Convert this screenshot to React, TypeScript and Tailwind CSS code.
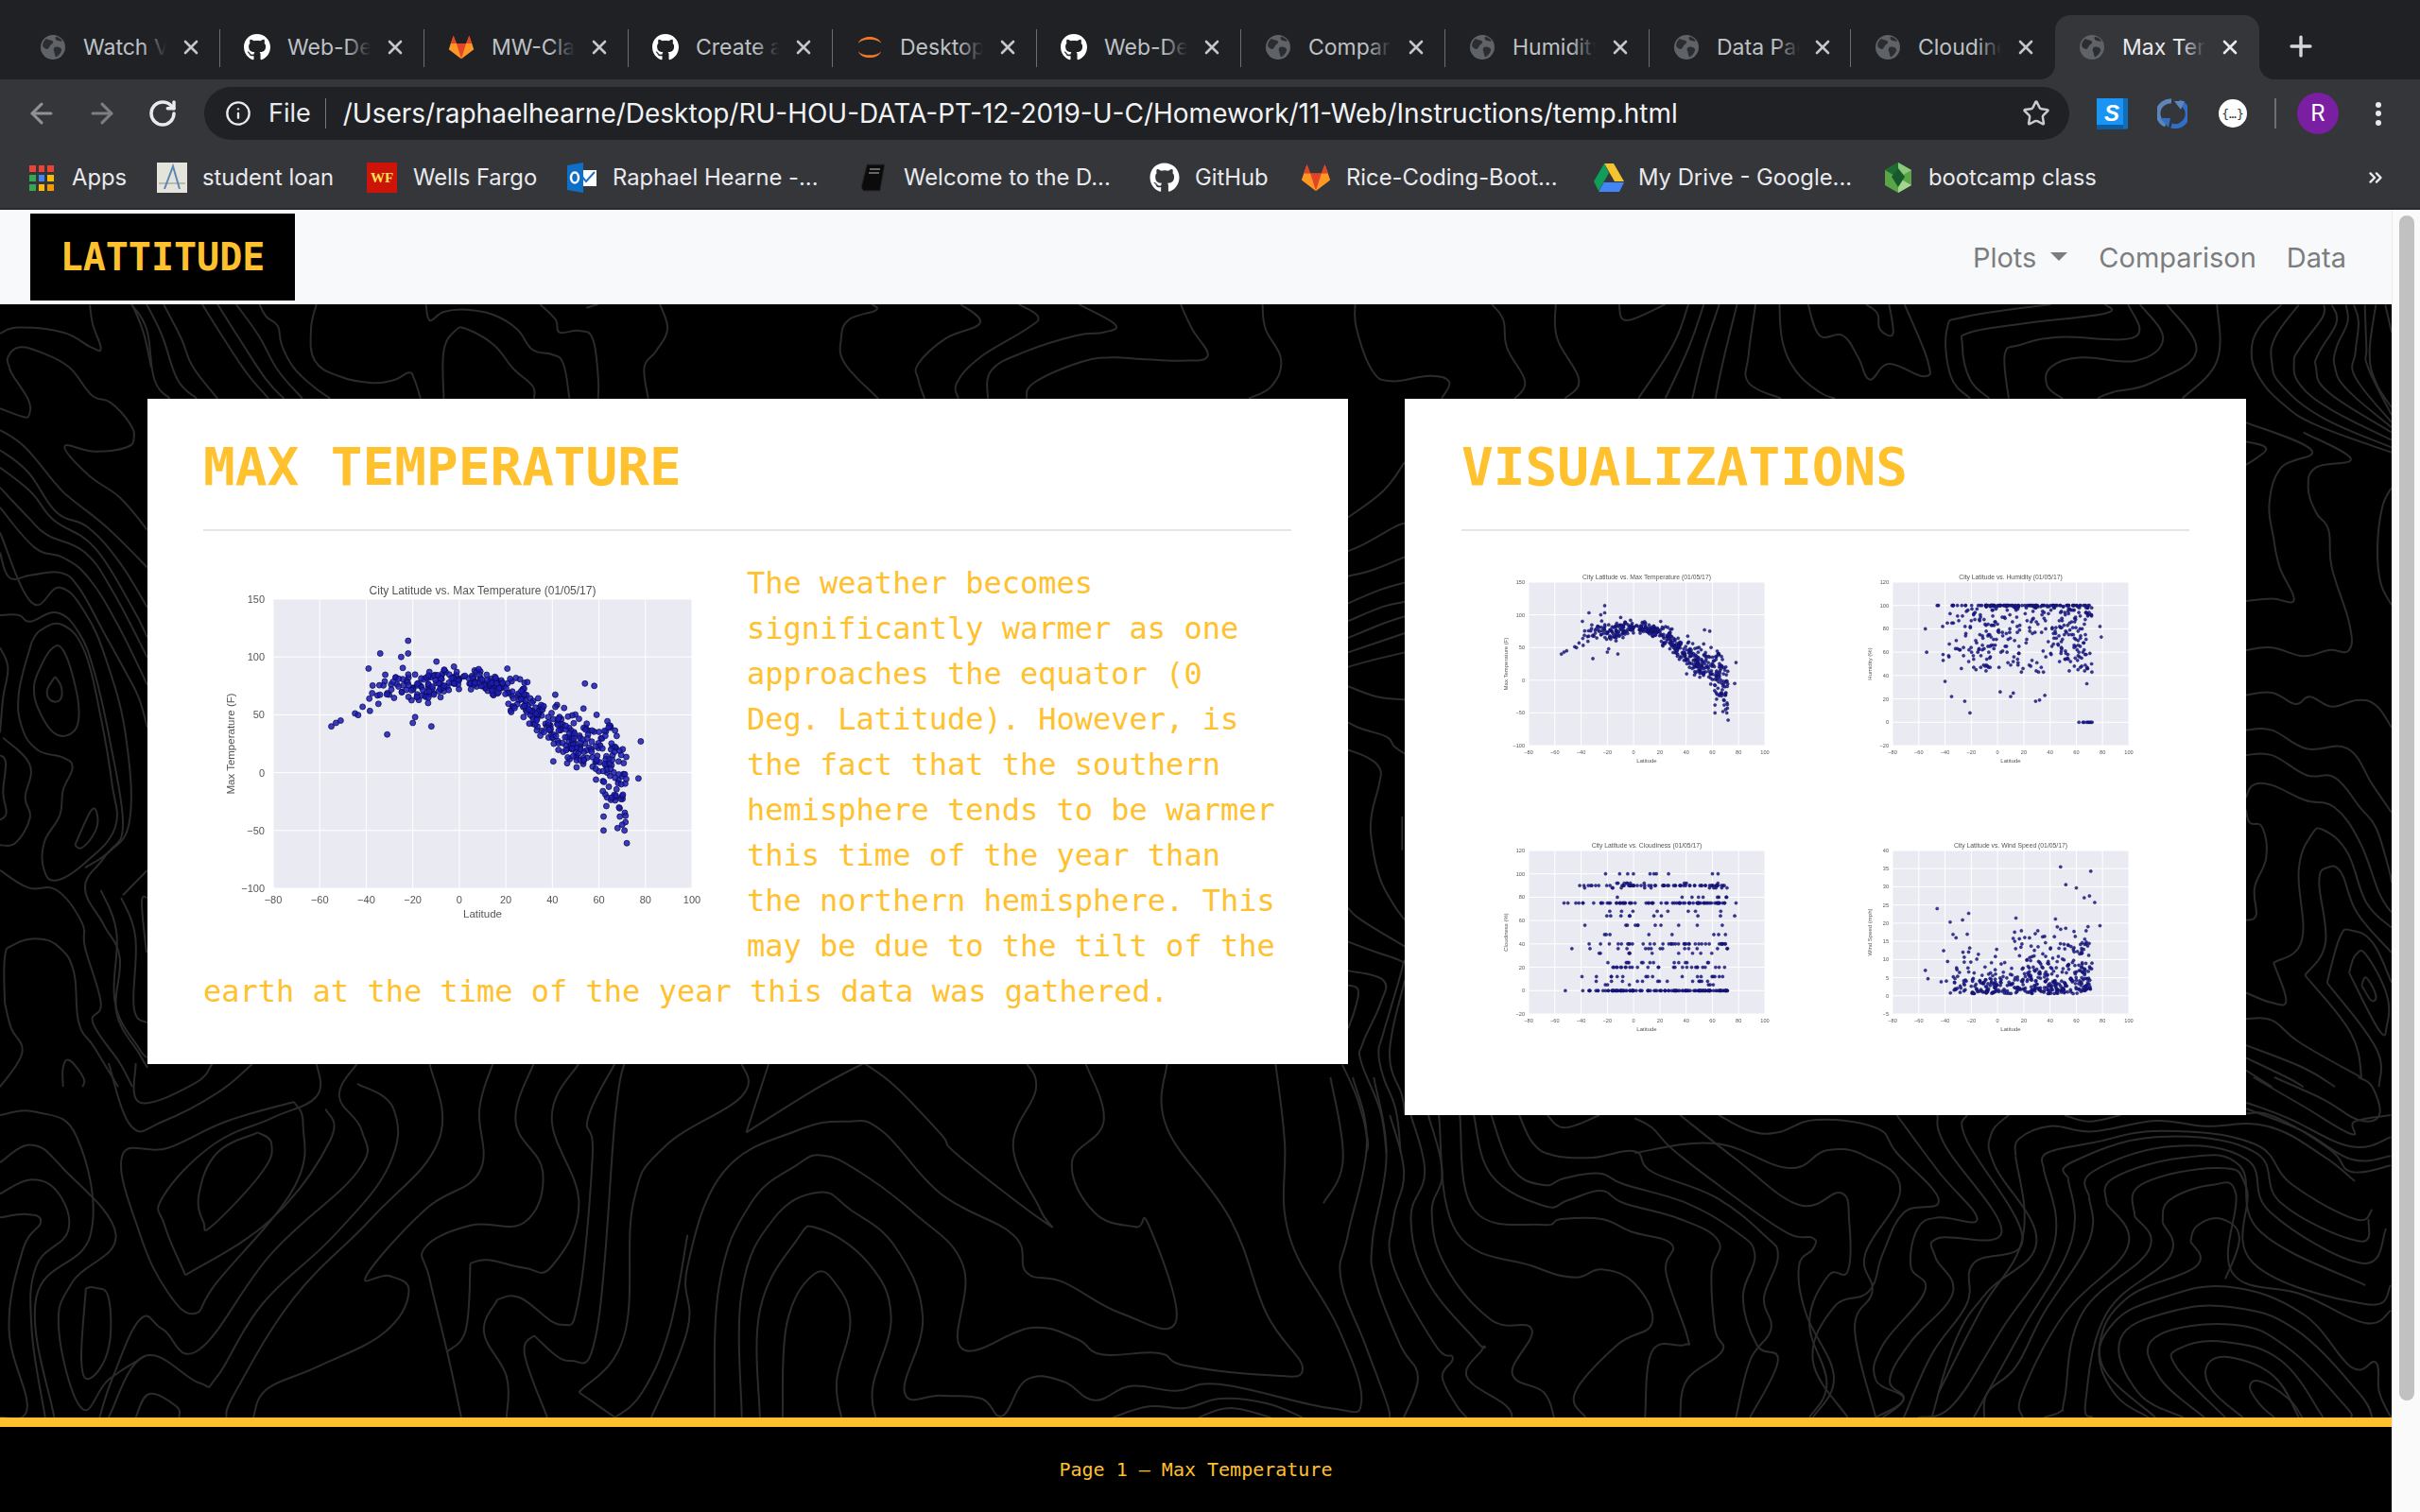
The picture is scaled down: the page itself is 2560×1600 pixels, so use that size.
import React from "react";
import { ArrowLeft, ArrowRight, RotateCw, Info, Star, X, Plus, ChevronsRight } from "lucide-react";
import { FaGithub } from "react-icons/fa";

/* ---------- contour background ---------- */
type Group = { ox: number; oy: number; sx: number; sy: number; lines: number[][]; ext?: boolean };
const groups: Group[] = [
  { ox: 0, oy: 315, sx: 1.225, sy: 3, lines: [
    [170,21,190,100,200,260,220,320],[190,21,210,120,230,260,255,320],[212,21,235,130,250,220,282,320],
    [262,21,290,130,320,240,348,320],[282,21,310,130,345,260,368,320],[306,21,335,120,360,230,392,320],
    [336,21,345,60,360,90,365,150,380,220,405,280,428,320],
    [410,21,403,100,408,200,440,250,480,270,510,262,530,238,537,260,545,320],
    [552,21,557,72,575,45,605,38,640,55,670,100,690,165,715,180,730,210,738,320],
    [700,21,720,70,725,110,750,105,768,130,775,250,775,320],
    [575,320,575,170,590,105,605,100,640,150,665,225,690,280,692,320],
    [855,21,865,100,850,170,835,220,840,320],[760,32,775,21],
    [1130,21,1135,40,1100,70,1090,130,1095,210,1138,320],
    [1245,21,1270,80,1225,130,1190,210,1190,260,1198,320],
    [1320,21,1345,60,1330,100,1270,190,1240,270,1242,320],
    [1398,21,1445,85,1430,110,1395,120,1330,170,1285,230,1280,320],
    [1330,320,1340,270,1400,205,1440,190,1480,195,1530,200,1565,185,1545,100,1530,21],
  ]},
  { ox: 1280, oy: 315, sx: 1.225, sy: 3, lines: [
    [68,21,72,100,92,195,80,280,50,320],[188,21,190,100,210,230,235,265,285,248,310,268,300,320],
    [365,21,380,70,385,160,408,265,395,320],[448,21,450,130,478,260,460,320],[530,21,540,72,590,21],
    [620,21,600,150,555,320],[640,21,620,160,590,320],[660,21,640,170,625,320],[683,21,665,200,655,320],
    [707,21,698,180,698,270,740,320],[738,21,742,140,760,235,790,300,810,320],
    [775,21,790,120,820,120,840,190,855,260,880,210,925,250,930,200,900,21],
    [850,21,865,50,868,100,885,115,880,21],
    [1090,21,980,60,955,100,960,250,985,320],[1160,21,1160,50,1060,80,985,110,975,150,985,260,1010,320],
    [1190,21,1198,125,1100,125,1050,150,1030,180,1035,320],
    [1205,21,1235,130,1200,200,1130,190,1090,220,1085,280,1105,320],
    [1240,21,1278,170,1220,270,1170,300,1150,320],[1305,21,1305,200,1260,320],
  ]},
  { ox: 0, oy: 320, sx: 3, sy: 1.889, lines: [
    [0,62,60,50,200,60,290,90,320,92,295,45,285,5],[420,5,455,60,480,130],
    [30,130,25,110,60,90,130,100,220,130,290,185,350,200,410,240,425,270,400,290,300,298,205,288,280,345,380,390,468,455],
    [0,212,70,228,92,225,90,195,40,145,30,130],
    [0,255,80,290,180,365,230,395,340,450,468,530],[0,295,90,340,180,420,280,450,380,520,468,610],
    [0,330,100,380,170,435,300,490,420,610,468,670],[0,370,90,430,150,465,270,500,360,580,468,710],
    [0,410,110,490,200,510,280,550,370,640,468,765],[0,500,30,550,100,545,190,540,250,570,330,660,400,740,440,790,468,850],
    [0,460,100,600,190,570,270,620,340,720,400,870,410,1040,330,1110,270,1170,330,1245,380,1310,370,1420,440,1500,468,1530],
    [0,625,60,625,95,638,180,620,250,660,300,740,350,880,390,1040,350,1095,270,1130],
    [100,680,130,655,200,645,270,700,320,830,355,960,365,1050,270,1120,180,1155,140,1135,140,1080,190,1025,200,975,230,930,200,910,120,895,70,850,60,780,100,680],
    [120,740,160,695,200,695,240,770,250,830,225,862,170,860,120,810,108,770,120,740],
    [175,748,195,770,190,795,160,795,150,775,175,748],[238,1085,290,1015,310,1030,300,1060,260,1090,238,1085],
    [0,690,25,730,10,790,0,860],[10,870,95,925,80,990,95,1030,50,1080,0,1085],[0,905,18,920,10,980,20,1020,0,1035],
    [0,1135,90,1170,180,1175,260,1240,270,1290,320,1400,295,1440,380,1520,420,1568],
    [320,1175,370,1260,365,1400,440,1490,468,1510],[385,1190,430,1270,425,1410,468,1440],[468,1190,450,1200,465,1300],[468,1135,390,1185],
    [15,1400,15,1310,40,1285,120,1272,190,1290,235,1340,250,1440,300,1490,375,1568],[15,1400,35,1450,70,1500,0,1568],
    [200,1568,200,1530,220,1515,265,1550,262,1568],
  ]},
  { ox: 1420, oy: 420, sx: 3, sy: 1.96, lines: [
    [18,250,130,195,198,135],[18,320,70,305,165,270,198,262],[18,372,100,358,198,332],[18,428,120,400,198,385],
    [18,465,130,435,198,425],[18,500,130,470,198,455],[18,530,198,490],[18,560,100,545,198,530],[18,600,110,622,198,628],
    [18,675,60,688,140,705,165,725,198,740],[18,732,80,748,118,770,118,800,92,870,95,930,120,1000,160,1050,198,1085],
    [18,1060,60,1085,198,1140],[18,1130,100,1150,185,1170,190,1185,130,1320,115,1360,130,1410,170,1480,185,1568],
    [18,1190,130,1210,120,1260,65,1340,60,1380,120,1480,140,1568],[18,1220,50,1230,40,1270,18,1310],
    [198,1210,150,1360,190,1450,198,1490],[0,1385,50,1460,80,1540,75,1568],[190,870,190,940],
  ]},
  { ox: 2370, oy: 320, sx: 3, sy: 1.889, lines: [
    [130,5,60,50,35,100,60,150,130,200,240,245,480,300],[185,5,110,70,100,120,130,165,260,230,480,290],
    [265,5,260,30,190,90,170,120,190,165,290,215,480,275],[290,5,305,40,250,100,240,130,280,180,480,260],
    [335,5,340,40,305,90,300,130,340,175,480,250],[360,5,375,40,365,100,365,150,480,240],
    [395,5,400,90,405,130,480,225],[430,5,410,100,430,160,480,210],[460,5,480,60],
    [18,240,225,295,130,330,92,400,105,470,125,530,170,595,100,592,18,597],[18,278,82,293,18,325],
    [200,260,350,312,240,330,215,370,240,420,280,455,290,530,345,640,345,695,280,695,200,707,100,690,18,695],
    [480,605,445,560,435,490,450,410,480,370],[18,785,100,780,175,803,220,788,290,808,370,795,430,805,480,850],
    [18,855,100,855,210,892,340,892,420,965,480,1020],[18,905,100,905,210,945,300,950,380,1010,430,1050,470,1130,480,1160],
    [18,990,40,965,100,965,205,995,300,1010,380,1080,440,1180,480,1220],[18,1015,30,1040,70,1050,82,1110,45,1170,50,1225,18,1235],
    [105,1320,195,1275,185,1135,225,1065,265,1055,340,1100,400,1200,480,1250],[205,1345,270,1280,250,1160,275,1130,320,1140,370,1220,480,1300],
    [275,1360,315,1270,350,1255,420,1280,480,1360],[345,1340,365,1305,400,1305,465,1385,465,1445,440,1455,345,1340],
    [385,1365,400,1350,430,1385,415,1395,385,1365],[105,1320,145,1395,100,1400,18,1380],[205,1345,350,1460,385,1550],
    [275,1360,430,1490,440,1568],[18,1432,100,1435,190,1480,385,1550],[18,1485,200,1530,300,1568],[18,1510,150,1550,200,1568],[18,1535,100,1568],
  ]},
  { ox: 1400, oy: 1140, sx: 1.352, sy: 3, lines: [
    [10,0,28,260,0,400],[42,0,62,210,35,500,25,640,60,850,90,1030,95,1080],[72,0,90,250,70,520,75,650,110,850,135,950,115,1080],
    [95,120,115,300,100,450,100,600,160,850,185,890,170,950,190,1040,205,1080],[125,120,145,300,125,450,150,650,220,840,228,860,205,950,260,1040,270,1080],
    [150,120,170,300,155,430,175,600,240,770,298,800,270,940,315,1000,330,1080],
    [165,120,190,490,300,600,360,635,398,610,445,655,470,780,420,850,360,1000,375,1080],
    [280,120,300,210,330,248,385,255,445,235,470,300,560,380,630,500,650,570,630,700,640,800,610,900,590,1080],
    [320,120,345,160,395,120],[240,120,270,290,315,342,345,320,395,305,430,340,520,400,590,490,617,565,600,700,620,850,650,900,610,1080],
    [215,120,240,310,315,408,350,390,397,360,430,400,510,450,565,520,555,620,560,800,570,870,520,960,510,1080],
    [195,120,215,420,312,468,340,450,398,450,440,490,498,530,490,620,520,820,515,850,470,870,460,1080],
    [445,130,470,160,500,230,570,350,660,490,700,510,700,545,680,600,690,750,730,950,700,1080],
    [510,120,590,260,680,405,740,367,752,460,750,615,722,630,695,780,720,970,695,1080],
    [565,120,610,170,650,175,705,135,790,160,820,240,880,390,830,430,800,560,780,680,730,730,700,900,750,1080],
    [445,240,560,210,665,288,720,232,775,250,825,355,775,560,785,680,760,800,790,1080],
    [820,120,880,300,935,450,880,445,850,480,840,600,860,680,800,850,790,960,830,1020,790,1080],
    [878,120,890,220,970,490,880,510,875,570,900,685,840,840,810,960,830,1020,800,1080],
    [920,120,920,200,1000,510,930,590,920,720,870,880,830,1080],
    [980,120,955,180,960,280,1020,520,950,680,905,830,870,1080],[1060,120,1095,140,1140,120],
    [990,250,995,195,1040,155,1100,172,1190,138,1260,155,1350,155,1430,250,1475,330],
    [1030,290,1035,240,1100,208,1200,170,1330,210,1385,340,1475,450,1500,420],[1065,320,1070,270,1190,190,1330,235,1370,400,1480,520,1495,450],
    [1095,380,1100,300,1210,220,1320,260,1355,430,1485,590,1520,480],[1120,400,1130,320,1230,255,1310,280,1340,490,1490,660],
    [1160,440,1170,340,1280,288,1320,350,1330,590,1490,720,1527,660],[1200,460,1210,390,1270,342,1305,370,1300,620,1400,690,1490,780,1527,740],
    [1240,520,1250,470,1285,450,1310,510,1290,640],
    [990,250,1000,510,940,740,880,1000],[1030,290,1045,530,970,800,900,1040,850,1080],[1065,320,1070,520,1000,800,950,1000,930,1080],
    [1095,380,1095,520,1030,750,990,920,950,1000,945,1080],[1120,400,1150,540,1060,750,1000,1000,1000,1080],[1160,440,1180,550,1085,750,1060,1020,1055,1060,1030,1080],
    [1200,460,1210,570,1120,750,1090,1030,1100,1080],[1240,520,1248,600,1150,700,1110,850,1130,1000,1180,1080],
    [1190,1080,1115,920,1130,780,1200,700,1295,665,1400,750,1470,920,1505,905,1510,1000,1527,1080],
    [1230,1080,1165,1000,1140,830,1210,745,1300,730,1390,800,1480,1000,1500,1080],
    [1260,1080,1195,950,1190,825,1300,785,1380,860,1460,1040,1470,1080],[1290,1080,1220,920,1225,860,1290,840,1370,900,1430,1080],
    [1315,1080,1270,990,1265,910,1300,890,1360,950,1395,1080],[1360,1080,1340,1040,1325,985,1340,965,1380,1020,1400,1080],
    [1330,0,1400,90,1470,180,1475,140,1527,120],[1360,0,1430,70,1480,135,1510,120,1500,30,1480,0],[1320,80,1380,130,1470,220,1527,190],
    [1320,100,1400,170,1470,260,1527,250],[1320,115,1360,125,1440,230,1470,300,1527,280],
  ]},
  { ox: 0, oy: 1140, sx: 1.045, sy: 3, ext: true, lines: [
    [0,120,40,110,85,190,100,500,40,700,60,1080],[0,270,35,215,70,290,128,500,80,650,65,800,90,1050,120,960,160,885],
    [0,370,35,325,65,370,75,490,40,600,35,800,50,1080],[0,445,30,435,45,460,25,550,10,800,30,1050,0,1080],
    [120,0,145,155,180,140,240,50,280,0],[150,0,155,80,215,20,235,0],
    [325,78,250,140,185,225,135,250,155,500,185,680,215,750,240,650,325,350,335,150,325,78],
    [285,175,240,240,220,370,225,460,235,470,290,300,300,210,285,175],
    [205,628,182,470,180,380,235,215,300,130,350,60,350,0],[205,628,300,450,365,200,360,100],
    [395,0,375,60,400,170,395,300,300,560,220,865,180,800,155,768,125,950,110,1080],
    [395,20,435,100,430,280,370,500,290,720,240,950,220,970,160,885,120,1080],
    [475,0,485,200,410,450,325,700,260,1000,250,1080],[590,0,570,140,600,300,580,460,520,470,470,540,475,640,495,880,510,1080],
    [545,0,530,100,530,300,470,420,405,630,430,630,452,680,425,810,350,920,295,990,280,1080],
    [520,590,540,580,580,605,610,600,640,400,610,130,640,0],[520,590,515,800,495,870],
    [550,705,575,700,620,785,640,700,655,250,650,130,680,0],[550,705,535,810,560,950,560,1080],
    [590,820,630,900,660,800,680,130,690,0],[590,820,580,880,605,1080],
    [640,1000,690,820,700,400,735,220,820,60,820,0],[640,1000,680,1080],
    [825,175,900,40,955,0],[825,175,850,0],[955,0,990,30,1040,180,1060,250,1155,460,1150,420,1120,220,1145,40,1135,0],
    [720,1080,760,800,760,600,800,300,880,170,935,140,975,170,1040,370,1120,500,1135,620,1175,650,1240,750,1300,775,1270,470,1255,475,1210,430,1185,270,1220,140,1200,0],
    [790,1080,795,660,830,400,880,280,910,248,950,300,1010,430,1065,600,1063,860,1140,795,1190,830,1218,880,1280,875,1310,915,1400,945,1440,925,1400,750,1360,450,1290,160,1290,0],
    [820,1080,820,680,855,450,905,365,940,420,990,540,1020,760,1000,1000,1040,1010,1085,1020,1108,1075,1135,960,1175,965,1210,1025,1250,980,1300,995,1350,975,1470,1050,1505,1030,1480,800,1425,500,1420,200,1410,0],
    [840,1080,840,740,880,520,905,480,960,590,985,760,965,980,968,1080],[865,1080,870,780,900,625,925,660,940,780,925,960,930,1080],
    [1230,1080,1270,1045,1310,1050,1350,1020,1400,1035,1440,1080],[1325,1080,1360,1050,1405,1080],
    [95,670,105,668,120,700,120,860,100,955,90,900,95,670],[150,1080,165,1005,195,1045,198,1080],[680,1080,710,1000,740,800,760,500],
  ]},
];
function smooth(p: [number, number][]) {
  let d = `M${p[0][0].toFixed(1)} ${p[0][1].toFixed(1)}`;
  for (let i = 0; i < p.length - 1; i++) {
    const a = p[Math.max(i - 1, 0)], b = p[i], c = p[i + 1], e = p[Math.min(i + 2, p.length - 1)];
    const k = 5;
    d += `C${(b[0] + (c[0] - a[0]) / k).toFixed(1)} ${(b[1] + (c[1] - a[1]) / k).toFixed(1)} ${(c[0] - (e[0] - b[0]) / k).toFixed(1)} ${(c[1] - (e[1] - b[1]) / k).toFixed(1)} ${c[0].toFixed(1)} ${c[1].toFixed(1)}`;
  }
  return d;
}
const contourPaths: string[] = [];
groups.forEach((g) => g.lines.forEach((l) => {
  const pts: [number, number][] = [];
  for (let i = 0; i < l.length; i += 2) {
    const y = g.ext && l[i + 1] === 0 ? -45 : l[i + 1];
    pts.push([g.ox + l[i] / g.sx, g.oy - 322 + y / g.sy]);
  }
  contourPaths.push(smooth(pts));
}));

/* ---------- scatter data ---------- */
function rng(seed: number) {
  let s = seed;
  return () => { s = (s * 1664525 + 1013904223) % 4294967296; return s / 4294967296; };
}
type P = [number, number];
const interp = (t: number[][], x: number) => {
  for (let i = 0; i < t.length - 1; i++) if (x <= t[i + 1][0]) {
    const f = (x - t[i][0]) / (t[i + 1][0] - t[i][0]);
    return t[i][1] + f * (t[i + 1][1] - t[i][1]);
  }
  return t[t.length - 1][1];
};
const lats = (r: () => number, n: number) => Array.from({ length: n }, () =>
  r() < 0.3 ? -46 + 46 * Math.sqrt(r()) : 72 * Math.pow(r(), 0.8));
const tempData: P[] = (() => {
  const r = rng(11);
  const m = [[-55,40],[-45,55],[-35,68],[-25,77],[-15,74],[-5,79],[5,79],[15,78],[25,66],[35,47],[45,30],[55,22],[65,8],[72,-15]];
  const pts: P[] = lats(r, 470).map((la) => {
    const sp = la < 0 ? 11 : la < 20 ? 8 : la < 40 ? 15 : la < 60 ? 20 : 28;
    const g = (r() + r() + r() - 1.5) * 1.25;
    return [la, interp(m, la) + g * sp];
  });
  return pts.concat([[-22,114],[-22,103],[-34,103],[-25,100],[-39,90],[-31,33],[-12,40],[-20,43],[-19,48],[54,77],[58,75],[59,50],[72,-61],[78,27],[77,-5],[-55,40],[-53,43],[-51,45],[71,-50],[70,-45],[68,-48],[62,-50],[62,-38],[69,-38]]);
})();
const humData: P[] = (() => {
  const r = rng(23);
  const pts: P[] = lats(r, 420).map((x) => [x, r() < 0.2 ? 100 : Math.round(100 - 58 * Math.pow(r(), 1.35))]);
  return pts.concat([[-55,80],[-54,60],[-46,100],[-45,100],[-40,35],[-35,22],[-25,18],[-21,8],[2,26],[10,22],[12,25],[29,18],[32,19],[36,23],[62,0],[65,0],[66,0],[68,0],[69,0],[70,0],[71,0],[72,0],[68,33],[78,82],[79,73]]);
})();
const cloudData: P[] = (() => {
  const r = rng(37);
  const rows = [12, 8, 24, 32, 36, 48, 56, 64, 68, 80, 88, 92, 100, 5];
  return lats(r, 470).map((x) => {
    const u = r();
    const y = u < 0.25 ? 0 : u < 0.31 ? 20 : u < 0.39 ? 40 : u < 0.52 ? 75 : u < 0.65 ? 90 : rows[Math.floor(r() * rows.length)];
    return [x, y] as P;
  }).concat([[-53,75],[-50,75],[-52,0],[-47,36],[-44,75],[78,75],[77,64]]);
})();
const windData: P[] = (() => {
  const r = rng(51);
  const pts: P[] = lats(r, 450).map((x) => {
    const base = x < -20 ? 8 : x > 40 ? 6.5 : x > 5 ? 5.5 : 3.6;
    return [x, 0.6 + -Math.log(1 - r() * 0.97) * base];
  });
  return pts.map(([x, y]) => [x, Math.min(y, 22)] as P).concat([[48,35.5],[71,34.3],[52,30.6],[60,29.7],[66,27],[70,27.5],[74,25.7],[-46,24],[-22,22.7],[14,21.4],[-55,7],[-53,4.7],[78,19.3]]);
})();

/* ---------- plot ---------- */
type PlotProps = {
  w: number; h: number; x0: number; x1: number; y0: number; y1: number;
  ymin: number; ymax: number; ystep: number; title: string; ylabel: string; data: P[];
  r: number; fill: string; edge: string; titleY: number; titleF: number; tickF: number; labelF: number;
  tickX: number; tickY: number; labelY: number; ylabX: number;
};
function Plot(p: PlotProps) {
  const sx = (v: number) => p.x0 + ((v + 80) / 180) * (p.x1 - p.x0);
  const sy = (v: number) => p.y1 - ((v - p.ymin) / (p.ymax - p.ymin)) * (p.y1 - p.y0);
  const xt = [-80, -60, -40, -20, 0, 20, 40, 60, 80, 100];
  const yt: number[] = [];
  for (let v = p.ymin; v <= p.ymax; v += p.ystep) yt.push(v);
  const ff = "'Liberation Sans', sans-serif";
  return (
    <svg width={p.w} height={p.h} viewBox={`0 0 ${p.w} ${p.h}`} className="block blur-[0.4px]">
      <rect x={p.x0} y={p.y0} width={p.x1 - p.x0} height={p.y1 - p.y0} fill="#eaeaf2" />
      {xt.map((v) => <line key={v} x1={sx(v)} x2={sx(v)} y1={p.y0} y2={p.y1} stroke="#fff" strokeWidth={1} />)}
      {yt.map((v) => <line key={v} y1={sy(v)} y2={sy(v)} x1={p.x0} x2={p.x1} stroke="#fff" strokeWidth={1} />)}
      {p.data.map(([x, y], i) => <circle key={i} cx={sx(x)} cy={sy(y)} r={p.r} fill={p.fill} fillOpacity={0.85} stroke={p.edge} strokeWidth={p.r / 4} />)}
      <g fontFamily={ff} fill="#555">
        <text x={(p.x0 + p.x1) / 2} y={p.titleY} fontSize={p.titleF} textAnchor="middle">{p.title}</text>
        {xt.map((v) => <text key={v} x={sx(v)} y={p.tickY} fontSize={p.tickF} textAnchor="middle">{v < 0 ? `\u2212${-v}` : v}</text>)}
        {yt.map((v) => <text key={v} x={p.tickX} y={sy(v) + p.tickF * 0.36} fontSize={p.tickF} textAnchor="end">{v < 0 ? `\u2212${-v}` : v}</text>)}
        <text x={(p.x0 + p.x1) / 2} y={p.labelY} fontSize={p.labelF} textAnchor="middle">Latitude</text>
        <text transform={`translate(${p.ylabX} ${(p.y0 + p.y1) / 2}) rotate(-90)`} fontSize={p.labelF} textAnchor="middle">{p.ylabel}</text>
      </g>
    </svg>
  );
}
const small = { w: 385, h: 284, x0: 71, x1: 321, y0: 18, y1: 191, r: 1.6, fill: "#17178c", edge: "#0b0b55", titleY: 15, titleF: 6.8, tickF: 5.6, labelF: 6, tickX: 67, tickY: 200, labelY: 209, ylabX: 49 };

/* ---------- favicons ---------- */
const Globe = () => (
  <svg width="28" height="28" viewBox="0 0 28 28">
    <circle cx="14" cy="14" r="13" fill="#5f6368" />
    <path d="M7 5c3 2 6 1 7 3s-3 3-4 6-4 2-6 0 0-7 3-9zM16 14c3-1 6 0 7 2s-3 7-5 8-2-4-3-6 0-3 1-4zM17 3c3 0 6 2 7 5-2 0-3-1-5-1s-3-3-2-4z" fill="#2b2d30" />
  </svg>
);
const Github = ({ s = 32 }: { s?: number }) => <FaGithub size={s} color="#fff" />;
const Gitlab = ({ s = 32 }: { s?: number }) => (
  <svg width={s} height={s} viewBox="0 0 32 32">
    <path d="M16 30 1 18.5l2.5-8L6.5 2l3.6 9.5h11.8L25.500 2l3 8.500 2.500 8z" fill="#fc6d26" />
    <path d="M16 30 10.100 11.500h11.800z" fill="#e24329" />
    <path d="M1 18.500 16 30 10.100 11.500H3.500z" fill="#fca326" opacity=".8" />
    <path d="M31 18.500 16 30l5.900-18.500h6.600z" fill="#fca326" opacity=".8" />
    <path d="M6.500 2 3.500 11.500h6.600zM25.500 2l-3.600 9.500h6.600z" fill="#e24329" />
  </svg>
);
const Jupyter = () => (
  <svg width="32" height="32" viewBox="0 0 32 32">
    <path d="M2 11C6 1 26 1 30 11 24 5 8 5 2 11z" fill="#f37726" />
    <path d="M2 21C6 31 26 31 30 21 24 27 8 27 2 21z" fill="#f37726" />
  </svg>
);
const Apps = () => {
  const c = ["#ea4335","#ea4335","#ea4335","#34a853","#4285f4","#fbbc05","#34a853","#fbbc05","#f29900"];
  return <div className="grid grid-cols-3 gap-[3px] w-[26px]">{c.map((x, i) => <span key={i} className="block w-[6.500px] h-[7px]" style={{ background: x }} />)}</div>;
};
const Student = () => (
  <svg width="32" height="32" viewBox="0 0 32 32">
    <rect width="32" height="32" fill="#e4e4dc" />
    <path d="M2 22h28" stroke="#b9b9b2" strokeWidth="2" />
    <path d="M8 28 17 4l7 24" fill="none" stroke="#5b87b0" strokeWidth="2" />
  </svg>
);
const Wf = () => (
  <span className="flex w-[32px] h-[32px] items-center justify-center bg-[#cd1409] text-[#ffe34d] text-[15px] font-bold font-['Liberation_Serif',serif]">WF</span>
);
const Outlook = () => (
  <svg width="32" height="32" viewBox="0 0 32 32">
    <rect x="13" y="8" width="18" height="17" fill="#fff" />
    <path d="M15 14l5 6 9-10" fill="none" stroke="#1a73c7" strokeWidth="2" />
    <path d="M0 3 17 0v32L0 29z" fill="#0f6fc6" />
    <ellipse cx="8" cy="16" rx="4" ry="5.500" fill="none" stroke="#fff" strokeWidth="2.500" />
  </svg>
);
const Book = () => (
  <svg width="28" height="32" viewBox="0 0 28 32">
    <path d="M7 2h19l-5 28H3L1 26z" fill="#0b0b0b" stroke="#2c2c2c" />
    <path d="M10 7h11M9 11h11" stroke="#666" strokeWidth="2" />
  </svg>
);
const Drive = () => (
  <svg width="32" height="30" viewBox="0 0 32 30">
    <path d="M11 0h10l11 19H22z" fill="#f4c430" />
    <path d="M11 0 0 19l5 10 11-19z" fill="#0f9d58" />
    <path d="M5 30l5.500-10H32l-5 10z" fill="#4285f4" />
  </svg>
);
const Gem = () => (
  <svg width="32" height="32" viewBox="0 0 32 32">
    <path d="M16 0 30 8v16l-14 8-14-8V8z" fill="#5aa548" />
    <path d="M16 0 30 8 16 16z" fill="#8cc97a" />
    <path d="M2 8l14-8v16z" fill="#1c6b30" />
    <path d="M16 16 30 24l-14 8z" fill="#a4d48e" />
    <path d="M16 6l7 9-7 11-7-11z" fill="#17592b" />
  </svg>
);

/* ---------- browser chrome ---------- */
const tabs: { icon: React.ReactNode; t: string }[] = [
  { icon: <Globe />, t: "Watch Vi" }, { icon: <Github />, t: "Web-Dev" }, { icon: <Gitlab />, t: "MW-Clas" },
  { icon: <Github />, t: "Create a" }, { icon: <Jupyter />, t: "Desktop" }, { icon: <Github />, t: "Web-Dev" },
  { icon: <Globe />, t: "Compari" }, { icon: <Globe />, t: "Humidity" }, { icon: <Globe />, t: "Data Pag" }, { icon: <Globe />, t: "Cloudine" },
];
function Tab({ icon, t, active, sep, narrow }: { icon: React.ReactNode; t: string; active?: boolean; sep?: boolean; narrow?: boolean }) {
  return (
    <div className={`relative ${narrow ? "w-[213px]" : "w-[216px]"} h-[68px] shrink-0 mt-[16px] flex items-center pl-[25px] ${active ? "bg-[#35363a] rounded-t-[16px]" : ""}`}>
      <span className="w-[28px] h-[32px] flex items-center justify-center shrink-0">{icon}</span>
      <div className="relative ml-[18px] w-[88px] overflow-hidden whitespace-nowrap">
        <span className={`text-[23px] leading-[32px] font-['Inter',sans-serif] ${active ? "text-[#e8eaed]" : "text-[#bdc1c6]"}`}>{t}</span>
        <span className={`absolute right-0 top-0 bottom-0 w-[26px] bg-linear-to-r from-transparent ${active ? "to-[#35363a]" : "to-[#202124]"}`} />
      </div>
      <X size={24} strokeWidth={2.6} color={active ? "#e8eaed" : "#c4c7ca"} className={`${narrow ? "ml-[12px]" : "ml-[14px]"} shrink-0`} />
      {sep && <span className="absolute right-0 top-[15px] h-[40px] w-[1px] bg-[#6b6e72]" />}
      {active && (
        <>
          <svg width="16" height="16" viewBox="0 0 16 16" className="absolute -left-[16px] bottom-0"><path d="M16 0v16H0C9 16 16 9 16 0z" fill="#35363a" /></svg>
          <svg width="16" height="16" viewBox="0 0 16 16" className="absolute -right-[16px] bottom-0"><path d="M0 0v16h16C7 16 0 9 0 0z" fill="#35363a" /></svg>
        </>
      )}
    </div>
  );
}
const marks: { w: string; iw: string; icon: React.ReactNode; t: string }[] = [
  { w: "w-[135px]", iw: "w-[45px]", icon: <Apps />, t: "Apps" },
  { w: "w-[222px]", iw: "w-[48px]", icon: <Student />, t: "student loan" },
  { w: "w-[212px]", iw: "w-[49px]", icon: <Wf />, t: "Wells Fargo" },
  { w: "w-[310px]", iw: "w-[48px]", icon: <Outlook />, t: "Raphael Hearne -..." },
  { w: "w-[306px]", iw: "w-[46px]", icon: <Book />, t: "Welcome to the D..." },
  { w: "w-[160px]", iw: "w-[48px]", icon: <Github />, t: "GitHub" },
  { w: "w-[310px]", iw: "w-[48px]", icon: <Gitlab />, t: "Rice-Coding-Boot..." },
  { w: "w-[306px]", iw: "w-[47px]", icon: <Drive />, t: "My Drive - Google..." },
  { w: "w-[300px]", iw: "w-[48px]", icon: <Gem />, t: "bootcamp class" },
];

const mono = "font-['DejaVu_Sans_Mono',monospace]";

export default function App() {
  return (
    <div className="w-[2560px] h-[1600px] flex flex-col overflow-hidden bg-black font-['Inter',sans-serif]">
      {/* tab strip */}
      <div className="h-[84px] shrink-0 bg-[#202124] flex pl-[17px]">
        {tabs.map((x, i) => <Tab key={i} icon={x.icon} t={x.t} sep={i < 9} narrow={i === 8} />)}
        <Tab icon={<Globe />} t="Max Tem" active />
        <Plus size={34} strokeWidth={2.4} color="#d5d7da" className="ml-[27px] mt-[32px]" />
      </div>
      {/* toolbar */}
      <div className="h-[76px] shrink-0 bg-[#35363a] flex items-start pt-[8px]">
        <div className="w-[216px] h-[56px] flex items-center shrink-0">
          <ArrowLeft size={34} strokeWidth={2.2} color="#8f9194" className="ml-[27px]" />
          <ArrowRight size={34} strokeWidth={2.2} color="#7c7e81" className="ml-[30px]" />
          <RotateCw size={32} strokeWidth={2.6} color="#e8eaed" className="ml-[31px]" />
        </div>
        <div className="w-[1973px] h-[56px] rounded-full bg-[#202124] flex items-center shrink-0">
          <Info size={28} strokeWidth={2} color="#e8eaed" className="ml-[22px]" />
          <span className="ml-[18px] text-[27px] text-[#e8eaed]">File</span>
          <span className="ml-[15px] w-[1px] h-[32px] bg-[#77797c]" />
          <span className="ml-[18px] text-[28px] text-[#f1f3f4] whitespace-nowrap">/Users/raphaelhearne/Desktop/RU-HOU-DATA-PT-12-2019-U-C/Homework/11-Web/Instructions/temp.html</span>
          <span className="flex-1" />
          <Star size={30} strokeWidth={2} color="#c9cbce" className="mr-[20px]" />
        </div>
        <div className="h-[56px] flex items-center shrink-0">
          <div className="relative ml-[29px] w-[32px] h-[32px] bg-[#1a94f5] flex items-center justify-center">
            <span className="text-white font-bold italic text-[24px] leading-none font-['Liberation_Sans',sans-serif]">S</span>
            <span className="absolute left-0 right-0 -bottom-[1px] h-[5px] bg-[#0c5c9e]" />
            <span className="absolute -right-[1px] top-0 bottom-0 w-[5px] bg-[#0f6fb8]" />
          </div>
          <svg width="32" height="32" viewBox="0 0 32 32" className="ml-[32px]">
            <path d="M9 28A13 13 0 0 1 15 3" fill="none" stroke="#5f86bb" strokeWidth="5" />
            <path d="M23 4A13 13 0 0 1 15 29" fill="none" stroke="#2f6fc4" strokeWidth="5" />
            <path d="M18 3h11l-4 9z" fill="#5f86bb" />
            <path d="M3 21h11l-2 10z" fill="#2f6fc4" />
          </svg>
          <div className="ml-[33px] w-[30px] h-[30px] rounded-full bg-white flex items-center justify-center text-[#333] text-[13px] leading-none font-['DejaVu_Sans_Mono',monospace]">{"{…}"}</div>
          <span className="ml-[29px] w-[2px] h-[32px] bg-[#6b6e72]" />
          <div className="ml-[22px] w-[44px] h-[44px] rounded-full bg-[#7b1fa2] flex items-center justify-center text-white text-[24px]">R</div>
          <div className="ml-[39px] flex flex-col gap-[3.500px]">
            <span className="w-[6px] h-[6px] rounded-full bg-[#e8eaed]" />
            <span className="w-[6px] h-[6px] rounded-full bg-[#e8eaed]" />
            <span className="w-[6px] h-[6px] rounded-full bg-[#e8eaed]" />
          </div>
        </div>
      </div>
      {/* bookmarks */}
      <div className="h-[62px] shrink-0 bg-[#35363a] border-b-[2px] border-[#292a2d] flex items-start pl-[31px] pt-[12px]">
        {marks.map((m, i) => (
          <div key={i} className={`${m.w} h-[32px] flex items-center shrink-0`}>
            <span className={`${m.iw} flex items-center shrink-0`}>{m.icon}</span>
            <span className="text-[23.800px] leading-[32px] text-[#e8eaed] whitespace-nowrap">{m.t}</span>
          </div>
        ))}
        <span className="flex-1" />
        <ChevronsRight size={22} strokeWidth={2.6} color="#e8eaed" className="mr-[36px] mt-[5px]" />
      </div>
      {/* page */}
      <div className="flex-1 flex min-h-0">
        <div className="w-[2530px] shrink-0 flex flex-col">
          <nav className="h-[100px] shrink-0 bg-[#f8f9fa] flex items-center justify-between pl-[32px] pr-[48px]">
            <div className={`w-[280px] h-[92px] bg-black flex items-center justify-center text-[#ffc12e] text-[40px] font-bold ${mono}`}>LATTITUDE</div>
            <div className="flex items-center text-[29px] text-[#7c7d7e] mt-[2px]">
              <span>Plots</span>
              <span className="ml-[15px] -mt-[3px] w-0 h-0 border-x-[9px] border-x-transparent border-t-[9px] border-t-[#7c7d7e]" />
              <span className="ml-[33px]">Comparison</span>
              <span className="ml-[32px]">Data</span>
            </div>
          </nav>
          <main className="relative flex-1 min-h-0 bg-black overflow-hidden">
            <svg width="2530" height="1178" viewBox="0 0 2530 1178" className="absolute inset-0 blur-[0.4px]">
              <g fill="none" stroke="#2b2b2b" strokeWidth="2">
                {contourPaths.map((d, i) => <path key={i} d={d} />)}
              </g>
            </svg>
            <div className="relative flex items-start pl-[156px] pt-[100px] gap-[60px]">
              <section className="w-[1270px] h-[704px] bg-white px-[59px] pt-[38px] shrink-0">
                <h1 className={`text-[56px] leading-[67px] font-bold text-[#ffc12e] ${mono}`}>MAX TEMPERATURE</h1>
                <hr className="mt-[33px] border-t-[2px] border-[#e5e5e5] mr-[1px]" />
                <div className={`mt-[31px] text-[32px] leading-[48px] text-[#ffc12e] ${mono}`}>
                  <div className="float-left mr-[15px]">
                    <Plot w={560} h={430} x0={74} x1={517} y0={41} y1={347} ymin={-100} ymax={150} ystep={50}
                      title="City Latitude vs. Max Temperature (01/05/17)" ylabel="Max Temperature (F)" data={tempData}
                      r={3} fill="#1c1cb4" edge="#0a0a50" titleY={36} titleF={12} tickF={11} labelF={11.500} tickX={65} tickY={363} labelY={378} ylabX={33} />
                  </div>
                  The weather becomes significantly warmer as one approaches the equator (0 Deg. Latitude). However, is the fact that the southern hemisphere tends to be warmer this time of the year than the northern hemisphere. This may be due to the tilt of the earth at the time of the year this data was gathered.
                </div>
              </section>
              <section className="w-[890px] bg-white px-[60px] pt-[38px] pb-[14px] shrink-0">
                <h1 className={`text-[56px] leading-[67px] font-bold text-[#ffc12e] ${mono}`}>VISUALIZATIONS</h1>
                <hr className="mt-[33px] border-t-[2px] border-[#e5e5e5]" />
                <div className="mt-[36px] grid grid-cols-2 w-[770px]">
                  <Plot {...small} ymin={-100} ymax={150} ystep={50} title="City Latitude vs. Max Temperature (01/05/17)" ylabel="Max Temperature (F)" data={tempData} />
                  <Plot {...small} ymin={-20} ymax={120} ystep={20} title="City Latitude vs. Humidity (01/05/17)" ylabel="Humidity (%)" data={humData} />
                  <Plot {...small} ymin={-20} ymax={120} ystep={20} title="City Latitude vs. Cloudiness (01/05/17)" ylabel="Cloudiness (%)" data={cloudData} />
                  <Plot {...small} ymin={-5} ymax={40} ystep={5} title="City Latitude vs. Wind Speed (01/05/17)" ylabel="Wind Speed (mph)" data={windData} />
                </div>
              </section>
            </div>
          </main>
          <footer className={`h-[100px] shrink-0 bg-black border-t-[10px] border-[#ffc12e] flex items-center justify-center text-[20px] text-[#ffc12e] ${mono}`}>
            Page 1 – Max Temperature
          </footer>
        </div>
        <aside className="flex-1 bg-[#fafafa] border-l-[1px] border-[#ebebeb] pt-[6px] pl-[7px]">
          <div className="w-[16px] h-[1254px] rounded-full bg-[#c1c1c1]" />
        </aside>
      </div>
    </div>
  );
}
